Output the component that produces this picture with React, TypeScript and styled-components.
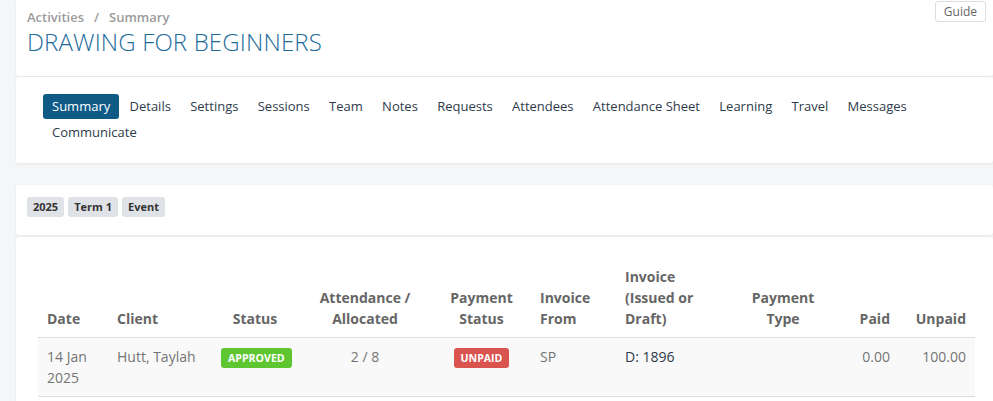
import React from "react";
import styled, { createGlobalStyle } from "styled-components";

const Global = createGlobalStyle`
  html, body { margin: 0; padding: 0; }
  body {
    background: #f5f6f8;
    font-family: "Open Sans", "Liberation Sans", sans-serif;
    color: #333;
  }
`;

const Page = styled.div`
  padding-left: 16px;
  display: flex;
  flex-direction: column;
`;

const Card = styled.section<{ $gapBelow?: number }>`
  background: #fff;
  border-radius: 3px;
  box-shadow: 0 1px 3px rgba(0, 0, 0, 0.07);
  margin-bottom: ${(p) => p.$gapBelow ?? 0}px;
`;

const HeaderCard = styled(Card)`
  display: flex;
  justify-content: space-between;
  align-items: flex-start;
  padding: 1px 7px 19px 11px;
  border-radius: 0 0 3px 3px;
`;

const TitleBlock = styled.div`
  margin-top: 7px;
`;

const Crumbs = styled.div`
  display: flex;
  gap: 10px;
  font-size: 13px;
  font-weight: 600;
  line-height: 19px;
  color: #9b9b9b;
`;

const Title = styled.h1`
  margin: 0;
  font-size: 24px;
  font-weight: 300;
  line-height: 30px;
  color: #1c6a9a;
  letter-spacing: 0.15px;
`;

const GuideButton = styled.button`
  font-family: inherit;
  font-size: 12px;
  line-height: 19px;
  color: #666;
  background: #fff;
  border: 1px solid #ddd;
  border-radius: 3px;
  padding: 0 8px;
`;

const TabsCard = styled(Card)`
  padding: 17px 18px 18px 27px;
`;

const Tabs = styled.nav`
  display: flex;
  flex-wrap: wrap;
  column-gap: 1.3px;
  row-gap: 1px;
`;

const Tab = styled.span<{ $active?: boolean }>`
  font-size: 13px;
  line-height: 25px;
  padding: 0 9px;
  border-radius: 3px;
  color: ${(p) => (p.$active ? "#fff" : "#2e3b4b")};
  background: ${(p) => (p.$active ? "#0f5b86" : "transparent")};
`;

const FilterCard = styled(Card)`
  display: flex;
  gap: 4px;
  padding: 12px 11px 18px 11px;
`;

const Chip = styled.span`
  font-size: 11px;
  font-weight: 700;
  line-height: 20px;
  padding: 0 6px;
  border-radius: 3px;
  background: #dfe2e6;
  color: #333;
`;

const TableCard = styled(Card)`
  padding: 21px 18px 20px 22px;
`;

const Table = styled.table`
  width: 100%;
  table-layout: fixed;
  border-collapse: collapse;
`;

type Align = "left" | "center" | "right";

const Th = styled.th<{ $align: Align }>`
  text-align: ${(p) => p.$align};
  vertical-align: bottom;
  font-size: 14px;
  font-weight: 700;
  line-height: 21px;
  color: #666;
  padding: 8px 9px 8px 9px;
  border-bottom: 1px solid #ddd;
`;

const Tr = styled.tr`
  background: #f9f9f9;
  border-bottom: 1px solid #ddd;
`;

const Td = styled.td<{ $align: Align; $dark?: boolean }>`
  text-align: ${(p) => p.$align};
  vertical-align: top;
  font-size: 14px;
  line-height: 21px;
  color: ${(p) => (p.$dark ? "#2f3a4a" : "#747474")};
  padding: 8px 9px;
`;

const Badge = styled.span<{ $tone: "green" | "red" }>`
  display: inline-block;
  vertical-align: middle;
  font-size: 10.6px;
  font-weight: 700;
  line-height: 20px;
  padding: 0 7px;
  border-radius: 3px;
  color: #fff;
  background: ${(p) => (p.$tone === "green" ? "#5dc631" : "#d9534f")};
`;

const tabs = [
  "Summary",
  "Details",
  "Settings",
  "Sessions",
  "Team",
  "Notes",
  "Requests",
  "Attendees",
  "Attendance Sheet",
  "Learning",
  "Travel",
  "Messages",
  "Communicate",
];

const columns: { w: number; align: Align; label: React.ReactNode }[] = [
  { w: 70, align: "left", label: "Date" },
  { w: 104, align: "left", label: "Client" },
  { w: 86, align: "center", label: "Status" },
  { w: 134, align: "center", label: <>Attendance /<br />Allocated</> },
  { w: 99, align: "center", label: <>Payment<br />Status</> },
  { w: 85, align: "left", label: <>Invoice<br />From</> },
  { w: 100, align: "left", label: <>Invoice<br />(Issued or<br />Draft)</> },
  { w: 134, align: "center", label: <>Payment<br />Type</> },
  { w: 49, align: "right", label: "Paid" },
  { w: 76, align: "right", label: "Unpaid" },
];

export default function App() {
  return (
    <>
      <Global />
      <Page>
        <HeaderCard $gapBelow={1}>
          <TitleBlock>
            <Crumbs>
              <span>Activities</span>
              <span>/</span>
              <span>Summary</span>
            </Crumbs>
            <Title>DRAWING FOR BEGINNERS</Title>
          </TitleBlock>
          <GuideButton>Guide</GuideButton>
        </HeaderCard>

        <TabsCard $gapBelow={22}>
          <Tabs>
            {tabs.map((t) => (
              <Tab key={t} $active={t === "Summary"}>
                {t}
              </Tab>
            ))}
          </Tabs>
        </TabsCard>

        <FilterCard $gapBelow={2}>
          <Chip>2025</Chip>
          <Chip>Term 1</Chip>
          <Chip>Event</Chip>
        </FilterCard>

        <TableCard>
          <Table>
            <colgroup>
              {columns.map((c, i) => (
                <col key={i} style={{ width: c.w }} />
              ))}
            </colgroup>
            <thead>
              <tr>
                {columns.map((c, i) => (
                  <Th key={i} $align={c.align}>
                    {c.label}
                  </Th>
                ))}
              </tr>
            </thead>
            <tbody>
              <Tr>
                <Td $align="left">14 Jan 2025</Td>
                <Td $align="left">Hutt, Taylah</Td>
                <Td $align="center">
                  <Badge $tone="green">APPROVED</Badge>
                </Td>
                <Td $align="center">2 / 8</Td>
                <Td $align="center">
                  <Badge $tone="red">UNPAID</Badge>
                </Td>
                <Td $align="left">SP</Td>
                <Td $align="left" $dark>
                  D: 1896
                </Td>
                <Td $align="center"></Td>
                <Td $align="right">0.00</Td>
                <Td $align="right">100.00</Td>
              </Tr>
            </tbody>
          </Table>
        </TableCard>
      </Page>
    </>
  );
}
